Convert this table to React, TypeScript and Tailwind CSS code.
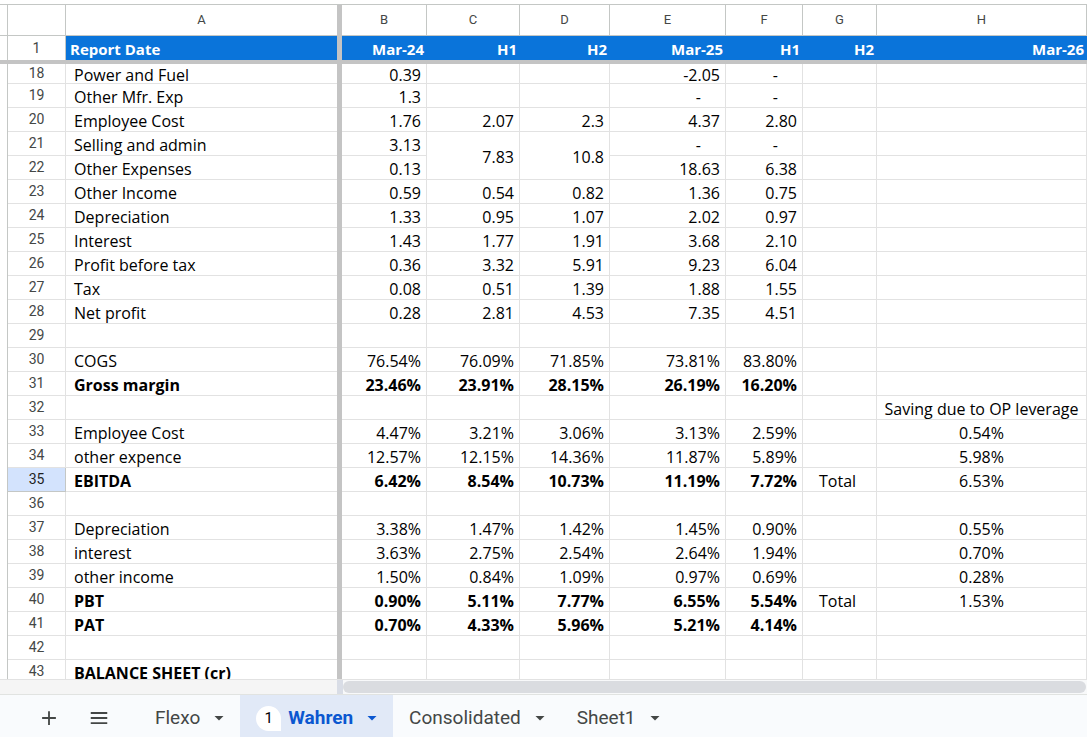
const COLS =
  "grid grid-cols-[8px_58px_271px_5px_85px_93px_90px_116px_77px_74px_210px]";

type Row = {
  n: number;
  a?: string;
  b?: string;
  c?: string;
  d?: string;
  e?: string;
  f?: string;
  g?: string;
  h?: string;
  bold?: boolean;
  merge?: boolean;
  skipCD?: boolean;
};

const rows: Row[] = [
  { n: 18, a: "Power and Fuel", b: "0.39", e: "-2.05", f: "-" },
  { n: 19, a: "Other Mfr. Exp", b: "1.3", e: "-", f: "-" },
  { n: 20, a: "Employee Cost", b: "1.76", c: "2.07", d: "2.3", e: "4.37", f: "2.80" },
  { n: 21, a: "Selling and admin", b: "3.13", c: "7.83", d: "10.8", e: "-", f: "-", merge: true },
  { n: 22, a: "Other Expenses", b: "0.13", e: "18.63", f: "6.38", skipCD: true },
  { n: 23, a: "Other Income", b: "0.59", c: "0.54", d: "0.82", e: "1.36", f: "0.75" },
  { n: 24, a: "Depreciation", b: "1.33", c: "0.95", d: "1.07", e: "2.02", f: "0.97" },
  { n: 25, a: "Interest", b: "1.43", c: "1.77", d: "1.91", e: "3.68", f: "2.10" },
  { n: 26, a: "Profit before tax", b: "0.36", c: "3.32", d: "5.91", e: "9.23", f: "6.04" },
  { n: 27, a: "Tax", b: "0.08", c: "0.51", d: "1.39", e: "1.88", f: "1.55" },
  { n: 28, a: "Net profit", b: "0.28", c: "2.81", d: "4.53", e: "7.35", f: "4.51" },
  { n: 29 },
  { n: 30, a: "COGS", b: "76.54%", c: "76.09%", d: "71.85%", e: "73.81%", f: "83.80%" },
  { n: 31, a: "Gross margin", b: "23.46%", c: "23.91%", d: "28.15%", e: "26.19%", f: "16.20%", bold: true },
  { n: 32, h: "Saving due to OP leverage" },
  { n: 33, a: "Employee Cost", b: "4.47%", c: "3.21%", d: "3.06%", e: "3.13%", f: "2.59%", h: "0.54%" },
  { n: 34, a: "other expence", b: "12.57%", c: "12.15%", d: "14.36%", e: "11.87%", f: "5.89%", h: "5.98%" },
  { n: 35, a: "EBITDA", b: "6.42%", c: "8.54%", d: "10.73%", e: "11.19%", f: "7.72%", g: "Total", h: "6.53%", bold: true },
  { n: 36 },
  { n: 37, a: "Depreciation", b: "3.38%", c: "1.47%", d: "1.42%", e: "1.45%", f: "0.90%", h: "0.55%" },
  { n: 38, a: "interest", b: "3.63%", c: "2.75%", d: "2.54%", e: "2.64%", f: "1.94%", h: "0.70%" },
  { n: 39, a: "other income", b: "1.50%", c: "0.84%", d: "1.09%", e: "0.97%", f: "0.69%", h: "0.28%" },
  { n: 40, a: "PBT", b: "0.90%", c: "5.11%", d: "7.77%", e: "6.55%", f: "5.54%", g: "Total", h: "1.53%", bold: true },
  { n: 41, a: "PAT", b: "0.70%", c: "4.33%", d: "5.96%", e: "5.21%", f: "4.14%", bold: true },
  { n: 42 },
  { n: 43, a: "BALANCE SHEET (cr)", bold: true },
];

const cellBase =
  "flex items-center pt-[2px] border-r border-b border-[#e2e2e2] overflow-hidden whitespace-nowrap text-[16px] leading-[20px] text-black";

function Num({ v, bold, span }: { v?: string; bold?: boolean; span?: boolean }) {
  const dash = v === "-";
  return (
    <div
      className={`${cellBase} justify-end ${dash ? "pr-[24px]" : "pr-[5px]"} ${bold ? "font-bold" : ""} ${span ? "row-span-2" : ""}`}
    >
      {v}
    </div>
  );
}

function Tab({ label, active }: { label: string; active?: boolean }) {
  return (
    <div
      className={`flex items-center h-full pt-[4px] pl-[16px] pr-[15px] ${active ? "bg-[#e1e9f7]" : ""}`}
    >
      {active && (
        <span className="flex items-center justify-center w-[25px] h-[25px] mr-[7px] rounded-full rounded-br-[4px] bg-white text-[15px] text-black">
          1
        </span>
      )}
      <span
        className={`text-[19px] ${active ? "text-[#0b57d0] font-bold" : "text-[#444746]"}`}
      >
        {label}
      </span>
      <svg width="12" height="12" viewBox="0 0 12 12" className="ml-[13px]">
        <path d="M1.5 4 L10.5 4 L6 8.5 Z" fill={active ? "#0b57d0" : "#444746"} />
      </svg>
    </div>
  );
}

export default function App() {
  return (
    <div
      className="w-[1087px] h-[737px] bg-white overflow-hidden flex flex-col"
      style={{ fontFamily: "'Open Sans', Lato, sans-serif" }}
    >
      {/* Grid */}
      <div className="h-[679px] overflow-hidden flex flex-col">
        <div className="h-[5px] shrink-0 border-b border-[#c4c7c5]" />

        {/* Column letters */}
        <div
          className={`${COLS} h-[31px] shrink-0 text-[13px] text-[#444746]`}
          style={{ fontFamily: "Roboto, Arial, sans-serif" }}
        >
          <div className="border-r border-b border-[#c4c7c5]" />
          <div className="border-r border-b border-[#c4c7c5]" />
          <div className="flex items-center justify-center border-b border-[#c4c7c5]">A</div>
          <div className="bg-[#c4c4c4]" />
          {["B", "C", "D", "E", "F", "G", "H"].map((l) => (
            <div
              key={l}
              className="flex items-center justify-center border-r border-b border-[#c4c7c5]"
            >
              {l}
            </div>
          ))}
        </div>

        {/* Row 1 header */}
        <div className={`${COLS} h-[24px] shrink-0`}>
          <div className="border-r border-[#c4c7c5]" />
          <div
            className="flex items-center justify-center border-r border-[#c4c7c5] text-[14px] text-[#444746]"
            style={{ fontFamily: "Roboto, Arial, sans-serif" }}
          >
            1
          </div>
          <div className="flex items-center pt-[2px] bg-[#0a74da] pl-[4px] text-[15px] font-bold text-white">
            Report Date
          </div>
          <div className="bg-[#c4c4c4]" />
          {["Mar-24", "H1", "H2", "Mar-25", "H1", "H2", "Mar-26"].map((t, i) => (
            <div
              key={i}
              className="flex items-center justify-end pt-[2px] bg-[#0a74da] pr-[3px] text-[15px] font-bold text-white"
            >
              {t}
            </div>
          ))}
        </div>

        {/* Freeze bar */}
        <div className="h-[4px] shrink-0 bg-[#c4c4c4]" />

        {/* Data rows: row 18 is partly scrolled under the freeze bar */}
        <div className={`${COLS} grid-rows-[20px] auto-rows-[24px]`}>
          {rows.map((r) => {
            const sel = r.n === 35;
            return [
              <div key={`${r.n}-x`} className="border-r border-[#c4c7c5]" />,
              <div
                key={`${r.n}-n`}
                className={`flex items-center justify-center border-r border-b text-[14px] ${
                  sel
                    ? "bg-[#d3e3fd] border-[#c4c7c5] text-[#1f1f1f]"
                    : "border-[#e2e2e2] text-[#444746]"
                }`}
                style={{ fontFamily: "Roboto, Arial, sans-serif" }}
              >
                {r.n}
              </div>,
              <div
                key={`${r.n}-a`}
                className={`${cellBase} pl-[8px] border-r-0 ${r.bold ? "font-bold" : ""}`}
              >
                {r.a}
              </div>,
              <div key={`${r.n}-bar`} className="bg-[#c4c4c4]" />,
              <Num key={`${r.n}-b`} v={r.b} bold={r.bold} />,
              ...(r.skipCD
                ? []
                : [
                    <Num key={`${r.n}-c`} v={r.c} bold={r.bold} span={r.merge} />,
                    <Num key={`${r.n}-d`} v={r.d} bold={r.bold} span={r.merge} />,
                  ]),
              <Num key={`${r.n}-e`} v={r.e} bold={r.bold} />,
              <Num key={`${r.n}-f`} v={r.f} bold={r.bold} />,
              <div key={`${r.n}-g`} className={`${cellBase} pl-[16px]`}>
                {r.g}
              </div>,
              <div key={`${r.n}-h`} className={`${cellBase} justify-center`}>
                {r.h}
              </div>,
            ];
          })}
        </div>
      </div>

      {/* Horizontal scroll area */}
      <div className="h-[15px] shrink-0 flex bg-[#f8f9fa] border-t border-[#e2e2e2]">
        <div className="w-[337px] bg-[#f5f5f5]" />
        <div className="w-[6px] bg-[#d9dde6]" />
        <div className="flex-1 py-[1px] pr-[1px]">
          <div className="h-full rounded-full bg-[#dadce0]" />
        </div>
      </div>

      {/* Sheet tabs */}
      <div
        className="flex-1 flex items-center bg-[#f9fbfd] border-t border-[#e1e3e1]"
        style={{ fontFamily: "Roboto, Arial, sans-serif" }}
      >
        <div className="flex items-center gap-[28px] pt-[4px] pl-[38px] pr-[29px]">
          <svg width="22" height="22" viewBox="0 0 24 24">
            <path d="M12 4.5v15M4.5 12h15" stroke="#444746" strokeWidth="2" />
          </svg>
          <svg width="22" height="22" viewBox="0 0 24 24">
            <path d="M3 6.5h18M3 12h18M3 17.5h18" stroke="#444746" strokeWidth="2" />
          </svg>
        </div>
        <div className="flex items-stretch h-full">
          <Tab label="Flexo" />
          <Tab label="Wahren" active />
          <Tab label="Consolidated" />
          <Tab label="Sheet1" />
        </div>
      </div>
    </div>
  );
}
